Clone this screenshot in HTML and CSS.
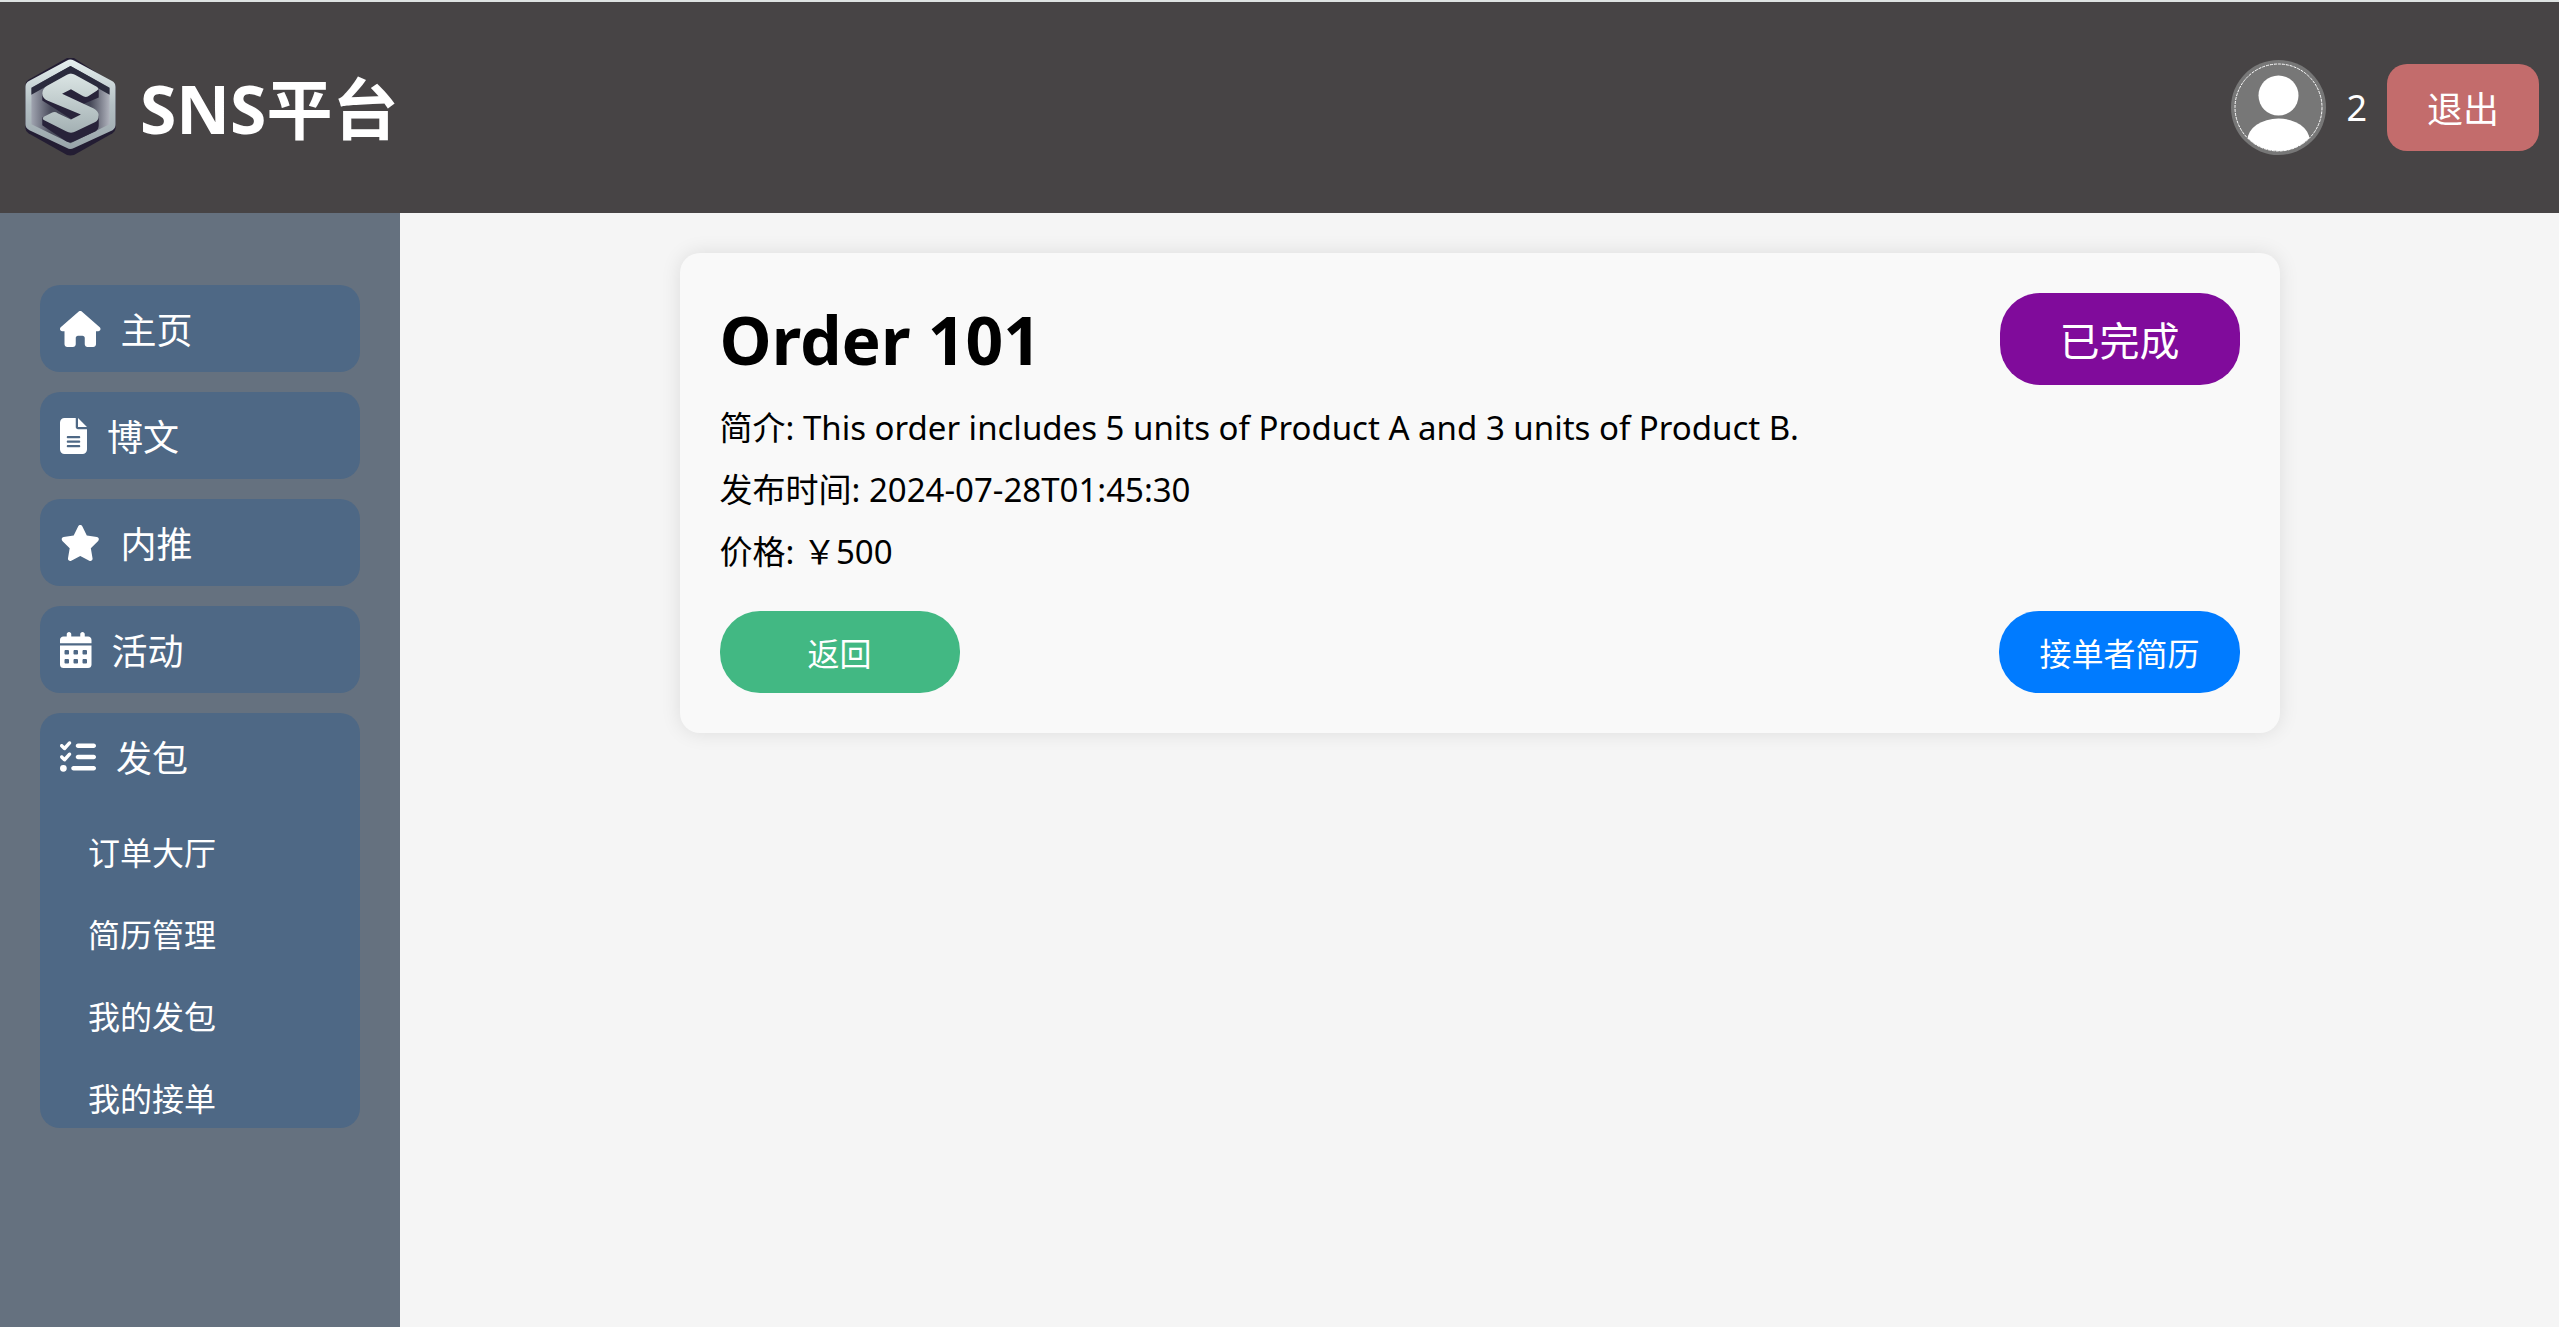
FILE: index.html
```html
<!DOCTYPE html>
<html lang="zh-CN">
<head>
<meta charset="utf-8">
<meta name="viewport" content="width=device-width, initial-scale=1">
<title>SNS平台</title>
<link rel="stylesheet" href="styles.css">
</head>
<body>
<header class="header">
  <div class="brand">
    <svg class="logo" viewBox="0 0 100 100" aria-hidden="true">
      <defs>
        <linearGradient id="rim" x1="0" y1="0" x2="0" y2="1">
          <stop offset="0" stop-color="#e6f0ef"/><stop offset="0.5" stop-color="#b4c0c4"/><stop offset="1" stop-color="#98a4a9"/>
        </linearGradient>
        <linearGradient id="well" x1="0" y1="0" x2="1" y2="0">
          <stop offset="0" stop-color="#a0a4b0"/><stop offset="0.25" stop-color="#4a4c5c"/><stop offset="0.75" stop-color="#454757"/><stop offset="1" stop-color="#b0b3bd"/>
        </linearGradient>
        <linearGradient id="face" x1="0" y1="0" x2="0" y2="1">
          <stop offset="0" stop-color="#dbe5e4"/><stop offset="1" stop-color="#a3b0b3"/>
        </linearGradient>
      </defs>
      <path fill="#231d33" d="M47 8 8 30Q5 32 5 35V79Q5 82 8 84L47 106Q50 107 54 106L93 84Q96 82 96 79V35L54 8Z" transform="translate(0 -8)"/>
      <path fill="url(#rim)" d="M47 3.500Q50 1.500 54 3.500L92 24Q96 26 96 30V68Q96 72 93 74L54 92Q50 94 47 92L9 74Q5 72 5 68V30Q5 26 9 24Z" transform="translate(0 -1)"/>
      <path fill="url(#well)" d="M50.500 8 90 30V67L50.500 86 11 67V30Z"/>
      <path fill="#2a2b3d" d="M50.500 8 90 30V37L50.500 15 11 37V30Z"/>
      <path fill="#28233a" d="M22 60V68L46 84Q50 86 54 84L76 74Q79 72 79 68V58L60 48 79 40V32L50 25 22 36V43L52 62 33 59Z"/>
      <path fill="url(#face)" d="M47 17Q51 15 55 17L77 29Q80 31 77 33L68 39Q65 40 62 38L51 31.500 42 36 74 51Q79 54 79 58 79 63 75 65L56 74Q51 77 46 74L24 63Q21 61 24 59L32 55Q35 54 38 56L51 62 61 57 27 43Q22 40 22 36 22 31 27 28Z"/>
    </svg>
    <h1 class="brand-name">SNS平台</h1>
  </div>
  <div class="user">
    <svg class="avatar" viewBox="0 0 95 95" role="img" aria-label="头像">
      <defs><clipPath id="ring"><circle cx="47.500" cy="47.500" r="43.500"/></clipPath></defs>
      <circle cx="47.500" cy="47.500" r="47.500" fill="#777"/>
      <circle cx="47.500" cy="35.500" r="20" fill="#fff"/>
      <ellipse cx="47.500" cy="80" rx="31" ry="21.500" fill="#fff" clip-path="url(#ring)"/>
      <circle cx="47.500" cy="47.500" r="43.500" fill="none" stroke="#fff" stroke-dasharray="3 1"/>
    </svg>
    <span class="user-name">2</span>
    <button class="logout" type="button">退出</button>
  </div>
</header>
<div class="layout">
  <nav class="sidebar">
    <ul class="menu">
      <li class="menu-item"><a class="menu-link" href="#">
        <svg class="icon" viewBox="0 0 576 512" aria-hidden="true"><path d="M575.800 255.500c0 18-15 32.100-32 32.100h-32l.7 160.200c0 2.700-.2 5.400-.5 8.100V472c0 22.100-17.900 40-40 40H456c-1.100 0-2.200 0-3.300-.1c-1.400 .1-2.800 .1-4.200 .1H416 392c-22.100 0-40-17.900-40-40V448 384c0-17.700-14.300-32-32-32H256c-17.700 0-32 14.300-32 32v64 24c0 22.100-17.900 40-40 40H160 128.100c-1.500 0-3-.1-4.500-.2c-1.200 .1-2.400 .2-3.600 .2H104c-22.100 0-40-17.900-40-40V360c0-.9 0-1.900 .1-2.800V287.600H32c-18 0-32-14-32-32.100c0-9 3-17 10-24L266.400 8c7-7 15-8 22-8s15 2 21 7L564.800 231.500c8 7 12 15 11 24z"/></svg>主页</a></li>
      <li class="menu-item"><a class="menu-link" href="#">
        <svg class="icon" viewBox="0 0 384 512" aria-hidden="true"><path d="M64 0C28.700 0 0 28.700 0 64V448c0 35.300 28.700 64 64 64H320c35.300 0 64-28.700 64-64V160H256c-17.700 0-32-14.300-32-32V0H64zM256 0V128H384L256 0zM112 256H272c8.800 0 16 7.200 16 16s-7.200 16-16 16H112c-8.800 0-16-7.200-16-16s7.200-16 16-16zm0 64H272c8.800 0 16 7.200 16 16s-7.200 16-16 16H112c-8.800 0-16-7.200-16-16s7.200-16 16-16zm0 64H272c8.800 0 16 7.200 16 16s-7.200 16-16 16H112c-8.800 0-16-7.200-16-16s7.200-16 16-16z"/></svg>博文</a></li>
      <li class="menu-item"><a class="menu-link" href="#">
        <svg class="icon" viewBox="0 0 576 512" aria-hidden="true"><path d="M316.900 18C311.600 7 300.400 0 288.100 0s-23.400 7-28.800 18L195 150.300 51.400 171.500c-12 1.800-22 10.200-25.700 21.700s-.7 24.200 7.900 32.700L137.800 329 113.200 474.700c-2 12 3 24.200 12.900 31.300s23 8 33.800 2.300l128.300-68.500 128.300 68.500c10.800 5.700 23.900 4.900 33.800-2.300s14.900-19.300 12.900-31.300L438.500 329 542.700 225.900c8.600-8.500 11.700-21.200 7.900-32.700s-13.700-19.900-25.700-21.700L381.200 150.300 316.900 18z"/></svg>内推</a></li>
      <li class="menu-item"><a class="menu-link" href="#">
        <svg class="icon" viewBox="0 0 448 512" aria-hidden="true"><path d="M128 0c17.700 0 32 14.300 32 32V64H288V32c0-17.700 14.300-32 32-32s32 14.300 32 32V64h48c26.500 0 48 21.500 48 48v48H0V112C0 85.500 21.500 64 48 64H96V32c0-17.700 14.300-32 32-32zM0 192H448V464c0 26.500-21.500 48-48 48H48c-26.500 0-48-21.500-48-48V192zm64 80v32c0 8.800 7.200 16 16 16h32c8.800 0 16-7.200 16-16V272c0-8.800-7.200-16-16-16H80c-8.800 0-16 7.200-16 16zm128 0v32c0 8.800 7.200 16 16 16h32c8.800 0 16-7.200 16-16V272c0-8.800-7.200-16-16-16H208c-8.800 0-16 7.200-16 16zm144-16c-8.800 0-16 7.200-16 16v32c0 8.800 7.200 16 16 16h32c8.800 0 16-7.200 16-16V272c0-8.800-7.200-16-16-16H336zM64 400v32c0 8.800 7.200 16 16 16h32c8.800 0 16-7.200 16-16V400c0-8.800-7.200-16-16-16H80c-8.800 0-16 7.200-16 16zm144-16c-8.800 0-16 7.200-16 16v32c0 8.800 7.200 16 16 16h32c8.800 0 16-7.200 16-16V400c0-8.800-7.200-16-16-16H208zm112 16v32c0 8.800 7.200 16 16 16h32c8.800 0 16-7.200 16-16V400c0-8.800-7.200-16-16-16H336c-8.800 0-16 7.200-16 16z"/></svg>活动</a></li>
      <li class="menu-item"><a class="menu-link" href="#">
        <svg class="icon" viewBox="0 0 512 512" aria-hidden="true"><path d="M152.100 38.200c9.900 8.900 10.700 24 1.800 33.900l-72 80c-4.400 4.900-10.600 7.800-17.200 7.900s-12.900-2.400-17.600-7L7 113C-2.300 103.600-2.300 88.400 7 79s24.600-9.400 33.900 0l22.100 22.100 55.100-61.200c8.900-9.900 24-10.700 33.900-1.800zm0 160c9.900 8.900 10.700 24 1.800 33.900l-72 80c-4.400 4.900-10.600 7.800-17.200 7.900s-12.900-2.400-17.600-7L7 273c-9.400-9.400-9.400-24.600 0-33.900s24.600-9.400 33.900 0l22.100 22.100 55.100-61.200c8.900-9.900 24-10.700 33.900-1.800zM224 96c0-17.700 14.300-32 32-32H480c17.700 0 32 14.300 32 32s-14.300 32-32 32H256c-17.700 0-32-14.300-32-32zm0 160c0-17.700 14.300-32 32-32H480c17.700 0 32 14.300 32 32s-14.300 32-32 32H256c-17.700 0-32-14.300-32-32zM160 416c0-17.700 14.300-32 32-32H480c17.700 0 32 14.300 32 32s-14.300 32-32 32H192c-17.700 0-32-14.300-32-32zM48 368a48 48 0 1 1 0 96 48 48 0 1 1 0-96z"/></svg>发包</a>
        <ul class="submenu">
          <li><a class="submenu-link" href="#">订单大厅</a></li>
          <li><a class="submenu-link" href="#">简历管理</a></li>
          <li><a class="submenu-link" href="#">我的发包</a></li>
          <li><a class="submenu-link" href="#">我的接单</a></li>
        </ul>
      </li>
    </ul>
  </nav>
  <main class="content">
    <article class="card">
      <div class="card-head">
        <h2 class="card-title">Order 101</h2>
        <span class="status">已完成</span>
      </div>
      <p class="detail">简介: This order includes 5 units of Product A and 3 units of Product B.</p>
      <p class="detail">发布时间: 2024-07-28T01:45:30</p>
      <p class="detail">价格: ￥500</p>
      <div class="actions">
        <button class="action action-back" type="button">返回</button>
        <button class="action action-resume" type="button">接单者简历</button>
      </div>
    </article>
  </main>
</div>
</body>
</html>
```
FILE: styles.css
```css
* {
  box-sizing: border-box;
  margin: 0;
  padding: 0;
}

body {
  display: flex;
  flex-direction: column;
  min-height: 100vh;
  background: #f5f5f5;
  color: #000;
  font: 32px/42px "Noto Sans", "Noto Sans CJK SC", sans-serif;
}

ul {
  list-style: none;
}

a {
  color: inherit;
  text-decoration: none;
}

button {
  border: 0;
  color: #fff;
  font-family: inherit;
  cursor: pointer;
}

.header {
  display: flex;
  align-items: center;
  justify-content: space-between;
  padding: 56px 20px;
  border-top: 2px solid #dee3e2;
  background: #474445;
  color: #fff;
}

.brand,
.user {
  display: flex;
  align-items: center;
  gap: 20px;
}

.logo {
  width: 100px;
  height: 99px;
}

.brand-name {
  font-size: 66px;
  line-height: 84px;
}

.avatar {
  width: 95px;
  height: 95px;
}

.user-name {
  font-size: 36px;
}

.logout {
  padding: 22px 40px 18px;
  border-radius: 20px;
  background: #c36c6c;
  font-size: 36px;
  line-height: 47px;
}

.layout {
  display: flex;
  flex: 1;
}

.sidebar {
  flex: 0 0 400px;
  padding: 72px 40px;
  background: #65717f;
  color: #fff;
}

.menu {
  display: grid;
  gap: 20px;
}

.menu-item {
  border-radius: 20px;
  background: #4e6885;
}

.menu-link {
  display: flex;
  align-items: center;
  gap: 20px;
  padding: 22px 20px 18px;
  font-size: 36px;
  line-height: 47px;
}

.icon {
  height: 36px;
  margin-bottom: 4px;
  fill: #fff;
}

.submenu {
  display: grid;
  gap: 40px;
  padding: 32px 48px 8px;
}

.submenu-link {
  display: block;
}

.content {
  flex: 1;
  padding: 40px;
}

.card {
  max-width: 1600px;
  margin: 0 auto;
  padding: 40px;
  border-radius: 20px;
  background: #f9f9f9;
  box-shadow: 0 0 20px rgba(0, 0, 0, 0.1);
}

.card-head {
  display: flex;
  align-items: center;
  justify-content: space-between;
  margin-bottom: 22px;
}

.card-title {
  font-size: 66px;
  line-height: 84px;
}

.status {
  min-width: 240px;
  padding: 22px 40px 18px;
  border-radius: 40px;
  background: #800b9b;
  color: #fff;
  font-size: 40px;
  line-height: 52px;
  text-align: center;
}

.detail {
  margin-bottom: 20px;
  font-size: 33px;
}

.actions {
  display: flex;
  justify-content: space-between;
  margin-top: 38px;
}

.action {
  min-width: 240px;
  padding: 22px 40px 18px;
  border-radius: 40px;
  font-size: 32px;
  line-height: 42px;
}

.action-back {
  background: #42b883;
}

.action-resume {
  background: #007bff;
}
```
